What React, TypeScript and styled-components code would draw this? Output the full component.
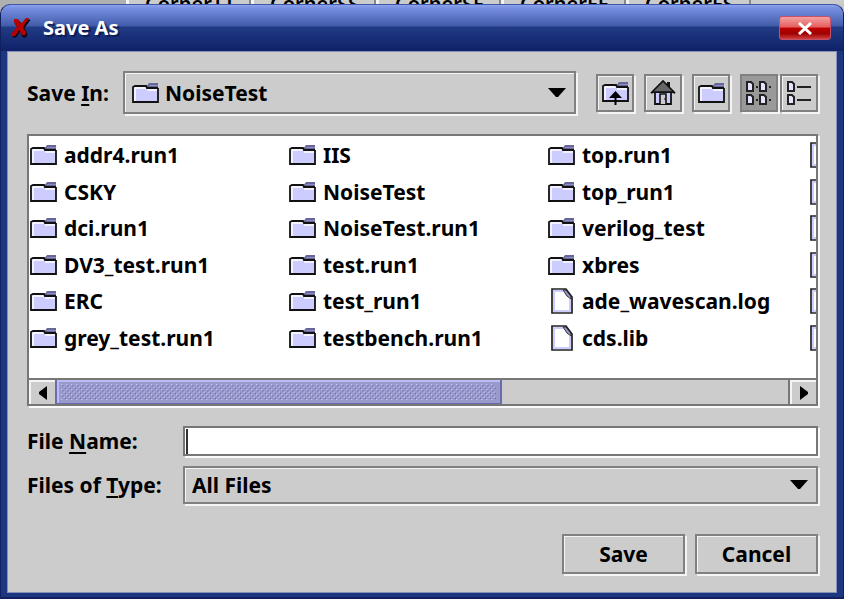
import React from "react";
import styled, { createGlobalStyle } from "styled-components";

const Global = createGlobalStyle`
  * { box-sizing: border-box; }
  body { margin: 0; background: #c8c8c8; color: #000; }
  body, button, input, select {
    font: 700 21px/28px "Noto Sans", "Open Sans", sans-serif;
  }
`;

const Screen = styled.div`
  min-height: 100vh;
  display: flex;
  flex-direction: column;
  background: linear-gradient(90deg, #b0b0b0 126px, #c8c8c8 126px);
`;

const Backdrop = styled.div`
  height: 4px;
  overflow: hidden;
  display: flex;
  align-items: flex-end;
  padding-left: 126px;
  background: #b0b0b0;
`;

const BackTab = styled.span`
  width: 125px;
  flex: none;
  padding-left: 16px;
  height: 11px;
  font-size: 20px;
  line-height: 22px;
  font-weight: 600;
  white-space: nowrap;
  background: #ccc;
  border-left: 3px solid #f4f4f4;
  border-right: 2px solid #888;
`;

const BackFill = styled.span`
  flex: 1;
  height: 4px;
  background: #ccc;
`;

const Dialog = styled.main`
  flex: 1;
  display: flex;
  flex-direction: column;
  border: 1px solid #102060;
  border-top-color: #3d56a8;
  border-bottom-width: 2px;
  border-radius: 10px 10px 0 0;
  padding: 0 6px 4px;
  background: #1d3680;
  overflow: hidden;
`;

const TitleBar = styled.header`
  display: flex;
  align-items: center;
  height: 46px;
  flex: none;
  margin: 0 -6px;
  padding: 0 12px 0 10px;
  background: linear-gradient(#8ba3ee 0, #7990e2 3px, #415ba9 21px, #213b84 22px, #10236a 44px, #10236a 100%);
`;

const Title = styled.h1`
  flex: 1;
  margin: 0 0 0 12px;
  font-size: 20px;
  line-height: 28px;
  color: #fff;
  text-shadow: 2px 2px 1px #0c1c55;
`;

const CloseButton = styled.button`
  display: flex;
  align-items: center;
  justify-content: center;
  width: 52px;
  height: 24px;
  padding: 0;
  border: 1px solid #c85068;
  border-radius: 3px;
  background: linear-gradient(#f3a0a0, #e65e5e 46%, #c00000 50%, #a00000 75%, #d04040);
`;

const Body = styled.form`
  flex: 1;
  display: flex;
  flex-direction: column;
  padding: 19px 18px 18px 19px;
  border: 1px solid #8490b8;
  background: #ccc;
`;

const Toolbar = styled.div`
  display: flex;
  align-items: center;
`;

const Label = styled.label<{ $width: number }>`
  width: ${(p) => p.$width}px;
  flex: none;
  white-space: nowrap;
  u { text-decoration-thickness: 2px; text-underline-offset: 3px; }
`;

const metalEdge = `
  border: 2px solid #808080;
  box-shadow: inset 1px 1px #f4f4f4, 2px 2px #f4f4f4;
  background-color: #ccc;
`;

const SelectBox = styled.div<{ $tall?: boolean }>`
  ${metalEdge}
  display: flex;
  align-items: center;
  flex: 1;
  min-width: 0;
  height: ${(p) => (p.$tall ? 43 : 38)}px;
  padding: 0 8px 0 7px;
  svg + select { padding-left: 6px; }
`;

const Select = styled.select`
  flex: 1;
  min-width: 0;
  height: 100%;
  margin: 0;
  padding: 0;
  border: 0;
  outline: 0;
  appearance: none;
  background: transparent;
  color: #000;
`;

const Tools = styled.div`
  display: flex;
  align-items: center;
  gap: 10px;
  margin-left: 20px;
`;

const ViewGroup = styled.div`
  display: flex;
  gap: 2px;
`;

const ToolButton = styled.button<{ $pressed?: boolean }>`
  ${metalEdge}
  display: flex;
  align-items: center;
  justify-content: center;
  width: 38px;
  height: 38px;
  padding: 0;
  ${(p) => p.$pressed && "background-color: #999; box-shadow: 2px 2px #f4f4f4;"}
`;

const ListPane = styled.section`
  display: flex;
  flex-direction: column;
  margin-top: 20px;
  border: 2px solid #777;
  box-shadow: 2px 2px #fafafa;
  background: #fff;
  overflow: hidden;
`;

const FileGrid = styled.ul`
  display: grid;
  grid-auto-flow: column;
  grid-template-rows: repeat(6, 1fr);
  grid-auto-columns: 259px;
  height: 242px;
  margin: 0;
  padding: 1px 0 22px 1px;
  list-style: none;
  overflow: hidden;
`;

const FileItem = styled.li<{ $file?: boolean }>`
  display: flex;
  align-items: center;
  gap: ${(p) => (p.$file ? 9 : 7)}px;
  padding-left: ${(p) => (p.$file ? 3 : 0)}px;
  white-space: nowrap;
  svg { flex: none; }
`;

const ScrollBar = styled.div`
  display: flex;
  height: 26px;
  border-top: 2px solid #777;
  background: #ccc;
`;

const ScrollButton = styled.button`
  display: flex;
  align-items: center;
  justify-content: center;
  width: 26px;
  padding: 0;
  border: 0;
  border-left: 2px solid #f4f4f4;
  border-top: 2px solid #f4f4f4;
  background: #ccc;
`;

const Track = styled.div`
  flex: 1;
  display: flex;
  border-right: 2px solid #777;
`;

const Thumb = styled.div`
  width: 61%;
  padding: 4px 4px 3px;
  border: 2px solid #6c6cac;
  border-width: 0 2px 1px;
  background: #9999cc;
  box-shadow: inset 2px 2px #bcbcf4;
`;

const Bumps = styled.svg`
  display: block;
  width: 100%;
  height: 100%;
`;

const Fields = styled.div`
  display: grid;
  grid-template-columns: auto 1fr;
  align-items: center;
  row-gap: 10px;
  margin-top: 20px;
`;

const NameInput = styled.input`
  display: block;
  width: 100%;
  height: 30px;
  padding: 0 3px;
  border: 2px solid #777;
  border-radius: 0;
  outline: 0;
  box-shadow: 2px 2px #fafafa;
  background: #fff;
`;

const InputWrap = styled.div`
  position: relative;
`;

const Caret = styled.span`
  position: absolute;
  left: 3px;
  top: 3px;
  bottom: 2px;
  width: 2px;
  background: #333;
`;

const Actions = styled.footer`
  display: flex;
  justify-content: flex-end;
  gap: 10px;
  margin-top: auto;
`;

const ActionButton = styled.button`
  ${metalEdge}
  width: 123px;
  height: 40px;
  padding: 0;
`;

const FolderShape = () => (
  <>
    <path d="M1 20V6L3 4H15V7H26V20z" fill="#ccccff" />
    <path d="M3 19V6H14" fill="none" stroke="#fff" strokeWidth="1.5" />
    <path d="M15 8H25" stroke="#fff" strokeWidth="1.5" />
    <path d="M14 5L17 1H26V6H14z" fill="#666699" />
    <path d="M17 3.500H26" stroke="#8c8cc4" />
    <path d="M26 6V20H1V5L3 4H14L15 6H26" fill="none" stroke="#111" strokeWidth="1.8" />
  </>
);

const FolderIcon = () => (
  <svg width="27" height="22" viewBox="0 0 27 22" aria-hidden="true"><FolderShape /></svg>
);

const UpIcon = () => (
  <svg width="27" height="24" viewBox="0 0 27 24" aria-hidden="true">
    <FolderShape />
    <path d="M13.500 10L20 17H7z" />
    <path d="M13.500 14V24" stroke="#000" strokeWidth="2" />
  </svg>
);

const FileIcon = () => (
  <svg width="22" height="26" viewBox="0 0 22 26" aria-hidden="true">
    <path d="M1 1H15L21 9V25H1z" fill="#fff" />
    <path d="M3 24V3H12M19 11V23H3" fill="none" stroke="#ccccff" strokeWidth="2" />
    <path d="M12 2L16 8L20 11V8L15 2z" fill="#9999cc" stroke="#333" />
    <path d="M1 1H15L21 9V25H1z" fill="none" stroke="#222" strokeWidth="1.7" />
  </svg>
);

const HomeIcon = () => (
  <svg width="26" height="27" viewBox="0 0 26 27" aria-hidden="true">
    <path d="M5 13H21V25H5z" fill="#ccccff" stroke="#111" strokeWidth="1.8" />
    <path d="M17 3H20V9H17z" fill="#111" />
    <path d="M1 14L13 2L25 14L22 13H4z" fill="#666" stroke="#111" strokeWidth="1.6" />
    <path d="M10 25V15H16V25" fill="#ccc" stroke="#111" strokeWidth="1.6" />
    <path d="M14 20H16" stroke="#111" />
  </svg>
);

const Page = ({ x, y }: { x: number; y: number }) => (
  <path d={`M${x} ${y}h4l2 2v7h-6z`} fill="#e4e4ff" stroke="#222" strokeWidth="2" />
);

const ListViewIcon = () => (
  <svg width="26" height="24" viewBox="0 0 26 24" aria-hidden="true">
    {[1, 14].map((x) => [1, 14].map((y) => (
      <g key={`${x}-${y}`}>
        <Page x={x} y={y} />
        <path d={`M${x + 9} ${y + 5}h2`} stroke="#222" strokeWidth="2" />
      </g>
    )))}
  </svg>
);

const DetailsIcon = () => (
  <svg width="24" height="24" viewBox="0 0 24 24" aria-hidden="true">
    {[1, 14].map((y) => (
      <g key={y}>
        <Page x={1} y={y} />
        <path d={`M10 ${y + 5}h14`} stroke="#222" strokeWidth="2" />
      </g>
    ))}
  </svg>
);

const DownArrow = () => (
  <svg width="18" height="10" viewBox="0 0 18 10" aria-hidden="true"><path d="M0 0H18L10 9H8z" /></svg>
);

const TitleIcon = () => (
  <svg width="20" height="22" viewBox="0 0 20 22" aria-hidden="true">
    <path d="M5 4L8 4L11 8L16 3H19L13 11L16 17L15 20H12L9 14L5 20H2V17L7 11L4 6z" fill="#1a0510" stroke="#1a0510" />
    <path d="M3 2L7 2L10 7L15 1H18L12 10L15 16L14 18H11L8 13L4 19H1V16L6 10L3 5z" fill="#b80000" />
  </svg>
);

const folders = [
  "addr4.run1", "CSKY", "dci.run1", "DV3_test.run1", "ERC", "grey_test.run1",
  "IIS", "NoiseTest", "NoiseTest.run1", "test.run1", "test_run1", "testbench.run1",
  "top.run1", "top_run1", "verilog_test", "xbres",
];
const files = ["ade_wavescan.log", "cds.lib", "", "", "", "", "", ""];
const backTabs = ["CornerTT", "CornerSS", "CornerSF", "CornerFF", "CornerFS"];

export default function App() {
  return (
    <Screen>
      <Global />
      <Backdrop>
        {backTabs.map((t) => <BackTab key={t}>{t}</BackTab>)}
        <BackFill />
      </Backdrop>
      <Dialog>
        <TitleBar>
          <TitleIcon />
          <Title>Save As</Title>
          <CloseButton type="button" aria-label="Close">
            <svg width="14" height="13" viewBox="0 0 14 13" aria-hidden="true">
              <path d="M1 1L13 12M13 1L1 12" stroke="#fff" strokeWidth="3" />
            </svg>
          </CloseButton>
        </TitleBar>
        <Body onSubmit={(e) => e.preventDefault()}>
          <Toolbar>
            <Label $width={96} htmlFor="save-in">Save <u>I</u>n:</Label>
            <SelectBox $tall>
              <FolderIcon />
              <Select id="save-in"><option>NoiseTest</option></Select>
              <DownArrow />
            </SelectBox>
            <Tools>
              <ToolButton type="button" aria-label="Up one level"><UpIcon /></ToolButton>
              <ToolButton type="button" aria-label="Home"><HomeIcon /></ToolButton>
              <ToolButton type="button" aria-label="Create new folder"><FolderIcon /></ToolButton>
              <ViewGroup>
                <ToolButton type="button" aria-label="List" aria-pressed="true" $pressed><ListViewIcon /></ToolButton>
                <ToolButton type="button" aria-label="Details"><DetailsIcon /></ToolButton>
              </ViewGroup>
            </Tools>
          </Toolbar>
          <ListPane>
            <FileGrid>
              {folders.map((n) => <FileItem key={n}><FolderIcon />{n}</FileItem>)}
              {files.map((n, i) => <FileItem key={i} $file><FileIcon />{n}</FileItem>)}
            </FileGrid>
            <ScrollBar>
              <ScrollButton type="button" aria-label="Scroll left">
                <svg width="8" height="14" viewBox="0 0 8 14" aria-hidden="true"><path d="M8 0V14L0 8V6z" /></svg>
              </ScrollButton>
              <Track>
                <Thumb>
                  <Bumps aria-hidden="true">
                    <defs>
                      <pattern id="bumps" width="5" height="5" patternUnits="userSpaceOnUse">
                        <path d="M0 0h1.300v1.300h-1.300zM2.500 2.500h1.300v1.300h-1.300z" fill="#c4c4f6" />
                        <path d="M1.300 1.300h1.200v1.200h-1.200zM3.800 3.800h1.200v1.200h-1.200z" fill="#6c6ca4" />
                      </pattern>
                    </defs>
                    <rect width="100%" height="100%" fill="url(#bumps)" />
                  </Bumps>
                </Thumb>
              </Track>
              <ScrollButton type="button" aria-label="Scroll right">
                <svg width="8" height="14" viewBox="0 0 8 14" aria-hidden="true"><path d="M0 0V14L8 8V6z" /></svg>
              </ScrollButton>
            </ScrollBar>
          </ListPane>
          <Fields>
            <Label $width={156} htmlFor="file-name">File <u>N</u>ame:</Label>
            <InputWrap><NameInput id="file-name" type="text" /><Caret /></InputWrap>
            <Label $width={156} htmlFor="file-type">Files of <u>T</u>ype:</Label>
            <SelectBox>
              <Select id="file-type"><option>All Files</option></Select>
              <DownArrow />
            </SelectBox>
          </Fields>
          <Actions>
            <ActionButton type="submit">Save</ActionButton>
            <ActionButton type="button">Cancel</ActionButton>
          </Actions>
        </Body>
      </Dialog>
    </Screen>
  );
}
